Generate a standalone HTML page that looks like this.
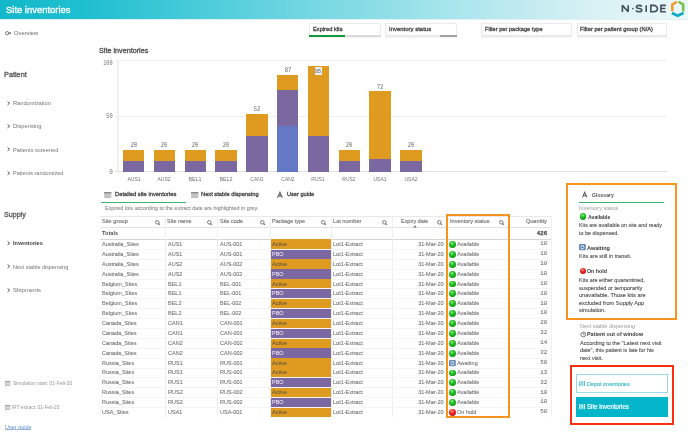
<!DOCTYPE html>
<html><head><meta charset="utf-8"><title>Site inventories</title>
<style>
html,body{margin:0;padding:0;background:#fff;}
body{width:688px;height:433px;position:relative;overflow:hidden;font-family:'Liberation Sans',sans-serif;}
#root{position:absolute;left:0;top:0;width:688px;height:433px;will-change:transform;background:#fff;overflow:hidden;}
.t{position:absolute;white-space:nowrap;}
.r{position:absolute;}
svg{position:absolute;overflow:visible;}
</style></head><body><div id="root">

<div class="r" style="left:0.00px;top:0.00px;width:688.00px;height:18.60px;background:linear-gradient(90deg,#12b8ca 0%,#1fbfd0 12.4%,#55cfdc 33.4%,#a8e5ec 65.4%,#d8f1f4 86%,#eaf8fa 100%);"></div>
<div class="r" style="left:0.00px;top:18.50px;width:688.00px;height:0.70px;background:rgba(200,225,230,0.5);"></div>
<div class="t" style="left:5.78px;top:5.22px;font-size:9.9px;line-height:9.9px;font-weight:400;color:#ffffff;font-family:'Liberation Sans', sans-serif;transform:scaleX(0.955);transform-origin:0 0;-webkit-text-stroke:0.35px #fff;">Site inventories</div>
<svg style="left:0;top:0" width="688" height="20" viewBox="0 0 688 20">
<g fill="none" stroke="#46505d" stroke-width="1.6" stroke-linejoin="miter">
<path d="M622.4 12.0 V5.35 L628.2 11.75 V5.2" stroke-linejoin="bevel"/>
<path d="M641.9 6.5 C641.2 5.7 640.2 5.35 639.1 5.35 C637.3 5.35 636.4 6.1 636.4 7.05 C636.4 8.1 637.5 8.35 639.1 8.55 C640.8 8.75 641.8 9.2 641.8 10.2 C641.8 11.2 640.8 11.75 639 11.75 C637.7 11.75 636.5 11.3 635.8 10.5"/>
<path d="M646.2 5.3 V11.9"/>
<path d="M650.8 5.35 V11.75 H653.4 C655.9 11.75 657.5 10.4 657.5 8.55 C657.5 6.7 655.9 5.35 653.4 5.35 Z"/>
<path d="M665.9 5.35 H660.9 V11.75 H665.9 M660.9 8.55 H665.4"/>
</g>
<rect x="632.1" y="7.9" width="1.5" height="1.4" fill="#46505d"/>
<g fill="none" stroke-linejoin="miter">
<path d="M677.0 1.7 L672.3 4.5 V11.2" stroke="#f59a2a" stroke-width="2.5"/>
<path d="M678.5 1.7 L683.2 4.5 V11.6" stroke="#7cc043" stroke-width="2.5"/>
<path d="M671.9 12.9 L677.7 15.7 L683.5 12.9" stroke="#12a9c4" stroke-width="2.8"/>
</g>
</svg>
<div class="r" style="left:309.30px;top:23.40px;width:71.70px;height:13.40px;background:#fff;border:1px solid #ebebeb;border-radius:1px;box-sizing:border-box;box-shadow:0 1px 1px rgba(0,0,0,0.05);"></div>
<div class="r" style="left:309.80px;top:35.00px;width:70.70px;height:0.90px;background:#e9e9e9;"></div>
<div class="r" style="left:309.30px;top:35.20px;width:35.70px;height:1.90px;background:#12993d;"></div>
<div class="r" style="left:345.00px;top:35.20px;width:36.00px;height:1.90px;background:#dcdcdc;"></div>
<div class="t" style="left:313.19px;top:27.11px;font-size:5.9px;line-height:5.9px;font-weight:400;color:#454545;font-family:'Liberation Sans', sans-serif;transform:scaleX(0.970);transform-origin:0 0;-webkit-text-stroke:0.3px #454545;">Expired kits</div>
<div class="r" style="left:385.40px;top:23.40px;width:71.60px;height:13.40px;background:#fff;border:1px solid #ebebeb;border-radius:1px;box-sizing:border-box;box-shadow:0 1px 1px rgba(0,0,0,0.05);"></div>
<div class="r" style="left:385.90px;top:35.00px;width:70.60px;height:0.90px;background:#e9e9e9;"></div>
<div class="r" style="left:439.80px;top:35.20px;width:17.20px;height:1.80px;background:#a3a3a3;"></div>
<div class="t" style="left:389.30px;top:27.11px;font-size:5.9px;line-height:5.9px;font-weight:400;color:#454545;font-family:'Liberation Sans', sans-serif;transform:scaleX(1.013);transform-origin:0 0;-webkit-text-stroke:0.3px #454545;">Inventory status</div>
<div class="r" style="left:481.00px;top:23.40px;width:90.50px;height:13.40px;background:#fff;border:1px solid #ebebeb;border-radius:1px;box-sizing:border-box;box-shadow:0 1px 1px rgba(0,0,0,0.05);"></div>
<div class="r" style="left:481.50px;top:35.00px;width:89.50px;height:0.90px;background:#e9e9e9;"></div>
<div class="t" style="left:484.89px;top:27.11px;font-size:5.9px;line-height:5.9px;font-weight:400;color:#454545;font-family:'Liberation Sans', sans-serif;transform:scaleX(0.960);transform-origin:0 0;-webkit-text-stroke:0.3px #454545;">Filter per package type</div>
<div class="r" style="left:576.60px;top:23.40px;width:90.90px;height:13.40px;background:#fff;border:1px solid #ebebeb;border-radius:1px;box-sizing:border-box;box-shadow:0 1px 1px rgba(0,0,0,0.05);"></div>
<div class="r" style="left:577.10px;top:35.00px;width:89.90px;height:0.90px;background:#e9e9e9;"></div>
<div class="t" style="left:580.49px;top:27.11px;font-size:5.9px;line-height:5.9px;font-weight:400;color:#454545;font-family:'Liberation Sans', sans-serif;transform:scaleX(0.978);transform-origin:0 0;-webkit-text-stroke:0.3px #454545;">Filter per patient group (N/A)</div>
<svg style="left:4.6px;top:30.6px" width="7" height="5" viewBox="0 0 7 5">
<circle cx="2.1" cy="2.2" r="1.65" fill="none" stroke="#777" stroke-width="0.95"/>
<rect x="3.7" y="1.4" width="2.4" height="1.6" fill="#777"/></svg>
<div class="t" style="left:13.89px;top:29.94px;font-size:6.1px;line-height:6.1px;font-weight:400;color:#6a6a6a;font-family:'Liberation Sans', sans-serif;transform:scaleX(0.951);transform-origin:0 0;">Overview</div>
<div class="t" style="left:3.80px;top:71.04px;font-size:7.4px;line-height:7.4px;font-weight:400;color:#666666;font-family:'Liberation Sans', sans-serif;transform:scaleX(0.989);transform-origin:0 0;-webkit-text-stroke:0.4px #666;">Patient</div>
<svg style="left:6.90px;top:100.90px" width="4" height="5" viewBox="0 0 4 5"><path d="M0.6 0.5 L2.6 2.2 L0.6 3.9" fill="none" stroke="#555" stroke-width="1.0"/></svg>
<div class="t" style="left:13.38px;top:100.30px;font-size:6.2px;line-height:6.2px;font-weight:400;color:#737373;font-family:'Liberation Sans', sans-serif;transform:scaleX(0.919);transform-origin:0 0;">Randomization</div>
<svg style="left:6.90px;top:123.80px" width="4" height="5" viewBox="0 0 4 5"><path d="M0.6 0.5 L2.6 2.2 L0.6 3.9" fill="none" stroke="#555" stroke-width="1.0"/></svg>
<div class="t" style="left:13.38px;top:123.15px;font-size:6.2px;line-height:6.2px;font-weight:400;color:#737373;font-family:'Liberation Sans', sans-serif;transform:scaleX(0.929);transform-origin:0 0;">Dispensing</div>
<svg style="left:6.90px;top:147.40px" width="4" height="5" viewBox="0 0 4 5"><path d="M0.6 0.5 L2.6 2.2 L0.6 3.9" fill="none" stroke="#555" stroke-width="1.0"/></svg>
<div class="t" style="left:13.38px;top:146.95px;font-size:6.2px;line-height:6.2px;font-weight:400;color:#737373;font-family:'Liberation Sans', sans-serif;transform:scaleX(0.916);transform-origin:0 0;">Patients screened</div>
<svg style="left:6.90px;top:170.70px" width="4" height="5" viewBox="0 0 4 5"><path d="M0.6 0.5 L2.6 2.2 L0.6 3.9" fill="none" stroke="#555" stroke-width="1.0"/></svg>
<div class="t" style="left:13.37px;top:170.15px;font-size:6.2px;line-height:6.2px;font-weight:400;color:#737373;font-family:'Liberation Sans', sans-serif;transform:scaleX(0.893);transform-origin:0 0;">Patients randomized</div>
<div class="t" style="left:3.69px;top:210.94px;font-size:7.4px;line-height:7.4px;font-weight:400;color:#666666;font-family:'Liberation Sans', sans-serif;transform:scaleX(0.963);transform-origin:0 0;-webkit-text-stroke:0.4px #666;">Supply</div>
<svg style="left:6.90px;top:240.60px" width="4" height="5" viewBox="0 0 4 5"><path d="M0.6 0.5 L2.6 2.2 L0.6 3.9" fill="none" stroke="#444" stroke-width="1.0"/></svg>
<div class="t" style="left:12.78px;top:239.84px;font-size:6.1px;line-height:6.1px;font-weight:700;color:#3d3d3d;font-family:'Liberation Sans', sans-serif;transform:scaleX(0.918);transform-origin:0 0;">Inventories</div>
<svg style="left:6.90px;top:264.30px" width="4" height="5" viewBox="0 0 4 5"><path d="M0.6 0.5 L2.6 2.2 L0.6 3.9" fill="none" stroke="#555" stroke-width="1.0"/></svg>
<div class="t" style="left:13.37px;top:263.85px;font-size:6.2px;line-height:6.2px;font-weight:400;color:#737373;font-family:'Liberation Sans', sans-serif;transform:scaleX(0.887);transform-origin:0 0;">Next stable dispensing</div>
<svg style="left:6.90px;top:287.50px" width="4" height="5" viewBox="0 0 4 5"><path d="M0.6 0.5 L2.6 2.2 L0.6 3.9" fill="none" stroke="#555" stroke-width="1.0"/></svg>
<div class="t" style="left:13.39px;top:286.65px;font-size:6.2px;line-height:6.2px;font-weight:400;color:#737373;font-family:'Liberation Sans', sans-serif;transform:scaleX(0.960);transform-origin:0 0;">Shipments</div>
<svg style="left:5.20px;top:381.20px" width="6" height="5" viewBox="0 0 6 5"><rect x="0.3" y="0.3" width="4.6" height="4.3" fill="#f4f4f4" stroke="#9a9a9a" stroke-width="0.6"/><rect x="0.3" y="0.3" width="4.6" height="1.0" fill="#9a9a9a"/><path d="M1.2 2.2h2.8M1.2 3.4h2.8M2.6 1.6v2.7" stroke="#b5b5b5" stroke-width="0.45"/></svg>
<div class="t" style="left:12.87px;top:380.86px;font-size:5.6px;line-height:5.6px;font-weight:400;color:#959595;font-family:'Liberation Sans', sans-serif;transform:scaleX(0.879);transform-origin:0 0;">Simulation start: 01-Feb-20</div>
<svg style="left:5.20px;top:404.60px" width="6" height="5" viewBox="0 0 6 5"><rect x="0.3" y="0.3" width="4.6" height="4.3" fill="#f4f4f4" stroke="#9a9a9a" stroke-width="0.6"/><rect x="0.3" y="0.3" width="4.6" height="1.0" fill="#9a9a9a"/><path d="M1.2 2.2h2.8M1.2 3.4h2.8M2.6 1.6v2.7" stroke="#b5b5b5" stroke-width="0.45"/></svg>
<div class="t" style="left:12.26px;top:404.86px;font-size:5.6px;line-height:5.6px;font-weight:400;color:#959595;font-family:'Liberation Sans', sans-serif;transform:scaleX(0.845);transform-origin:0 0;">IRT extract: 01-Feb-20</div>
<div class="t" style="left:4.89px;top:424.59px;font-size:5.8px;line-height:5.8px;font-weight:400;color:#6590c8;font-family:'Liberation Sans', sans-serif;transform:scaleX(0.949);transform-origin:0 0;">User guide</div>
<div class="r" style="left:4.90px;top:429.40px;width:26.20px;height:0.70px;background:#93b4dc;"></div>
<div class="t" style="left:99.13px;top:48.21px;font-size:6.6px;line-height:6.6px;font-weight:400;color:#5a5a5a;font-family:'Liberation Sans', sans-serif;transform:scaleX(1.093);transform-origin:0 0;-webkit-text-stroke:0.35px #5a5a5a;">Site inventories</div>
<div class="r" style="left:114.50px;top:59.60px;width:552.00px;height:1.00px;background:#efefef;"></div>
<div class="r" style="left:114.50px;top:115.50px;width:552.00px;height:1.00px;background:#efefef;"></div>
<div class="r" style="left:117.40px;top:60.10px;width:1.30px;height:111.80px;background:#f0f0f0;"></div>
<div class="r" style="left:114.50px;top:171.15px;width:552.00px;height:1.00px;background:#e0e0e0;"></div>
<div class="t" style="right:575.20px;text-align:right;top:60.58px;font-size:6.4px;line-height:6.4px;font-weight:400;color:#707070;font-family:'Liberation Mono', monospace;transform:scaleX(0.814);transform-origin:100% 0;">100</div>
<div class="t" style="right:575.20px;text-align:right;top:114.08px;font-size:6.4px;line-height:6.4px;font-weight:400;color:#707070;font-family:'Liberation Mono', monospace;transform:scaleX(0.844);transform-origin:100% 0;">50</div>
<div class="t" style="right:575.00px;text-align:right;top:169.98px;font-size:6.4px;line-height:6.4px;font-weight:400;color:#707070;font-family:'Liberation Mono', monospace;transform:scaleX(0.930);transform-origin:100% 0;">0</div>
<div class="r" style="left:122.90px;top:160.72px;width:21.50px;height:11.18px;background:#7b68a1;"></div>
<div class="r" style="left:122.90px;top:149.54px;width:21.50px;height:11.18px;background:#de9b20;"></div>
<div class="t" style="left:83.65px;width:100px;text-align:center;top:143.02px;font-size:6.4px;line-height:6.4px;font-weight:400;color:#6a6a6a;font-family:'Liberation Mono', monospace;transform:scaleX(0.857);transform-origin:50% 0;">20</div>
<div class="t" style="left:83.65px;width:100px;text-align:center;top:176.32px;font-size:6.0px;line-height:6.0px;font-weight:400;color:#737373;font-family:'Liberation Sans', sans-serif;transform:scaleX(0.844);transform-origin:50% 0;">AUS1</div>
<div class="r" style="left:153.70px;top:160.72px;width:21.50px;height:11.18px;background:#7b68a1;"></div>
<div class="r" style="left:153.70px;top:149.54px;width:21.50px;height:11.18px;background:#de9b20;"></div>
<div class="t" style="left:114.45px;width:100px;text-align:center;top:143.02px;font-size:6.4px;line-height:6.4px;font-weight:400;color:#6a6a6a;font-family:'Liberation Mono', monospace;transform:scaleX(0.857);transform-origin:50% 0;">20</div>
<div class="t" style="left:114.45px;width:100px;text-align:center;top:176.32px;font-size:6.0px;line-height:6.0px;font-weight:400;color:#737373;font-family:'Liberation Sans', sans-serif;transform:scaleX(0.844);transform-origin:50% 0;">AUS2</div>
<div class="r" style="left:184.50px;top:160.72px;width:21.50px;height:11.18px;background:#7b68a1;"></div>
<div class="r" style="left:184.50px;top:149.54px;width:21.50px;height:11.18px;background:#de9b20;"></div>
<div class="t" style="left:145.25px;width:100px;text-align:center;top:143.02px;font-size:6.4px;line-height:6.4px;font-weight:400;color:#6a6a6a;font-family:'Liberation Mono', monospace;transform:scaleX(0.857);transform-origin:50% 0;">20</div>
<div class="t" style="left:145.25px;width:100px;text-align:center;top:176.32px;font-size:6.0px;line-height:6.0px;font-weight:400;color:#737373;font-family:'Liberation Sans', sans-serif;transform:scaleX(0.901);transform-origin:50% 0;">BEL1</div>
<div class="r" style="left:215.30px;top:160.72px;width:21.50px;height:11.18px;background:#7b68a1;"></div>
<div class="r" style="left:215.30px;top:149.54px;width:21.50px;height:11.18px;background:#de9b20;"></div>
<div class="t" style="left:176.05px;width:100px;text-align:center;top:143.02px;font-size:6.4px;line-height:6.4px;font-weight:400;color:#6a6a6a;font-family:'Liberation Mono', monospace;transform:scaleX(0.857);transform-origin:50% 0;">20</div>
<div class="t" style="left:176.05px;width:100px;text-align:center;top:176.32px;font-size:6.0px;line-height:6.0px;font-weight:400;color:#737373;font-family:'Liberation Sans', sans-serif;transform:scaleX(0.901);transform-origin:50% 0;">BEL2</div>
<div class="r" style="left:246.10px;top:136.12px;width:21.50px;height:35.78px;background:#7b68a1;"></div>
<div class="r" style="left:246.10px;top:113.76px;width:21.50px;height:22.36px;background:#de9b20;"></div>
<div class="t" style="left:206.85px;width:100px;text-align:center;top:107.25px;font-size:6.4px;line-height:6.4px;font-weight:400;color:#6a6a6a;font-family:'Liberation Mono', monospace;transform:scaleX(0.857);transform-origin:50% 0;">52</div>
<div class="t" style="left:206.85px;width:100px;text-align:center;top:176.32px;font-size:6.0px;line-height:6.0px;font-weight:400;color:#737373;font-family:'Liberation Sans', sans-serif;transform:scaleX(0.827);transform-origin:50% 0;">CAN1</div>
<div class="r" style="left:276.90px;top:126.06px;width:21.50px;height:45.84px;background:#6479c6;"></div>
<div class="r" style="left:276.90px;top:90.29px;width:21.50px;height:35.78px;background:#7b68a1;"></div>
<div class="r" style="left:276.90px;top:74.63px;width:21.50px;height:15.65px;background:#de9b20;"></div>
<div class="t" style="left:237.65px;width:100px;text-align:center;top:68.12px;font-size:6.4px;line-height:6.4px;font-weight:400;color:#6a6a6a;font-family:'Liberation Mono', monospace;transform:scaleX(0.857);transform-origin:50% 0;">87</div>
<div class="t" style="left:237.65px;width:100px;text-align:center;top:176.32px;font-size:6.0px;line-height:6.0px;font-weight:400;color:#737373;font-family:'Liberation Sans', sans-serif;transform:scaleX(0.827);transform-origin:50% 0;">CAN2</div>
<div class="r" style="left:307.70px;top:136.12px;width:21.50px;height:35.78px;background:#7b68a1;"></div>
<div class="r" style="left:307.70px;top:65.69px;width:21.50px;height:70.43px;background:#de9b20;"></div>
<div class="r" style="left:314.95px;top:66.99px;width:7.10px;height:7.60px;background:#eaeef0;"></div>
<div class="t" style="left:268.45px;width:100px;text-align:center;top:68.94px;font-size:6.2px;line-height:6.2px;font-weight:400;color:#5a5a5a;font-family:'Liberation Mono', monospace;transform:scaleX(0.828);transform-origin:50% 0;">95</div>
<div class="t" style="left:268.45px;width:100px;text-align:center;top:176.32px;font-size:6.0px;line-height:6.0px;font-weight:400;color:#737373;font-family:'Liberation Sans', sans-serif;transform:scaleX(0.827);transform-origin:50% 0;">RUS1</div>
<div class="r" style="left:338.50px;top:160.72px;width:21.50px;height:11.18px;background:#7b68a1;"></div>
<div class="r" style="left:338.50px;top:149.54px;width:21.50px;height:11.18px;background:#de9b20;"></div>
<div class="t" style="left:299.25px;width:100px;text-align:center;top:143.02px;font-size:6.4px;line-height:6.4px;font-weight:400;color:#6a6a6a;font-family:'Liberation Mono', monospace;transform:scaleX(0.857);transform-origin:50% 0;">20</div>
<div class="t" style="left:299.25px;width:100px;text-align:center;top:176.32px;font-size:6.0px;line-height:6.0px;font-weight:400;color:#737373;font-family:'Liberation Sans', sans-serif;transform:scaleX(0.827);transform-origin:50% 0;">RUS2</div>
<div class="r" style="left:369.30px;top:159.04px;width:21.50px;height:12.86px;background:#7b68a1;"></div>
<div class="r" style="left:369.30px;top:91.40px;width:21.50px;height:67.64px;background:#de9b20;"></div>
<div class="t" style="left:330.05px;width:100px;text-align:center;top:84.89px;font-size:6.4px;line-height:6.4px;font-weight:400;color:#6a6a6a;font-family:'Liberation Mono', monospace;transform:scaleX(0.857);transform-origin:50% 0;">72</div>
<div class="t" style="left:330.05px;width:100px;text-align:center;top:176.32px;font-size:6.0px;line-height:6.0px;font-weight:400;color:#737373;font-family:'Liberation Sans', sans-serif;transform:scaleX(0.844);transform-origin:50% 0;">USA1</div>
<div class="r" style="left:400.10px;top:160.72px;width:21.50px;height:11.18px;background:#7b68a1;"></div>
<div class="r" style="left:400.10px;top:149.54px;width:21.50px;height:11.18px;background:#de9b20;"></div>
<div class="t" style="left:360.85px;width:100px;text-align:center;top:143.02px;font-size:6.4px;line-height:6.4px;font-weight:400;color:#6a6a6a;font-family:'Liberation Mono', monospace;transform:scaleX(0.857);transform-origin:50% 0;">20</div>
<div class="t" style="left:360.85px;width:100px;text-align:center;top:176.32px;font-size:6.0px;line-height:6.0px;font-weight:400;color:#737373;font-family:'Liberation Sans', sans-serif;transform:scaleX(0.844);transform-origin:50% 0;">USA2</div>
<svg style="left:104.20px;top:191.70px" width="8" height="7" viewBox="0 0 8 7"><rect x="0" y="0" width="7.4" height="6" fill="#c9c9c9"/><rect x="0" y="0" width="7.4" height="1.3" fill="#8a8a8a"/><path d="M2.45 1.3v4.7M4.95 1.3v4.7" stroke="#9a9a9a" stroke-width="0.6"/><path d="M0 3.5h7.4" stroke="#dadada" stroke-width="0.4"/></svg>
<div class="t" style="left:114.89px;top:192.31px;font-size:5.9px;line-height:5.9px;font-weight:400;color:#454545;font-family:'Liberation Sans', sans-serif;transform:scaleX(0.981);transform-origin:0 0;-webkit-text-stroke:0.3px #454545;">Detailed site inventories</div>
<div class="r" style="left:100.80px;top:201.80px;width:85.30px;height:1.20px;background:#3cb56f;"></div>
<svg style="left:190.50px;top:191.70px" width="8" height="7" viewBox="0 0 8 7"><rect x="0" y="0" width="7.4" height="6" fill="#c9c9c9"/><rect x="0" y="0" width="7.4" height="1.3" fill="#8a8a8a"/><path d="M2.45 1.3v4.7M4.95 1.3v4.7" stroke="#9a9a9a" stroke-width="0.6"/><path d="M0 3.5h7.4" stroke="#dadada" stroke-width="0.4"/></svg>
<div class="t" style="left:200.69px;top:192.31px;font-size:5.9px;line-height:5.9px;font-weight:400;color:#454545;font-family:'Liberation Sans', sans-serif;transform:scaleX(0.972);transform-origin:0 0;-webkit-text-stroke:0.3px #454545;">Next stable dispensing</div>
<svg style="left:276.5px;top:191.8px" width="7" height="7" viewBox="0 0 7 7"><path d="M0.5 5.8 L2.95 0.4 L5.4 5.8 M1.4 3.9 H4.5" fill="none" stroke="#5f5f5f" stroke-width="1.1"/></svg>
<div class="t" style="left:286.79px;top:192.31px;font-size:5.9px;line-height:5.9px;font-weight:400;color:#454545;font-family:'Liberation Sans', sans-serif;transform:scaleX(0.952);transform-origin:0 0;-webkit-text-stroke:0.3px #454545;">User guide</div>
<div class="t" style="left:104.89px;top:205.57px;font-size:5.7px;line-height:5.7px;font-weight:400;color:#8e8e8e;font-family:'Liberation Sans', sans-serif;transform:scaleX(0.948);transform-origin:0 0;-webkit-text-stroke:0.1px #8e8e8e;">Expired lots according to the extract date are highlighted in grey.</div>
<div class="r" style="left:100.00px;top:215.90px;width:451.50px;height:0.80px;background:#e8e8e8;"></div>
<div class="r" style="left:100.00px;top:227.00px;width:451.50px;height:0.90px;background:#e2e2e2;"></div>
<div class="r" style="left:100.00px;top:238.80px;width:451.50px;height:1.30px;background:#d6d6d6;"></div>
<div class="r" style="left:165.20px;top:216.30px;width:0.80px;height:201.18px;background:#efefef;"></div>
<div class="r" style="left:217.20px;top:216.30px;width:0.80px;height:201.18px;background:#efefef;"></div>
<div class="r" style="left:270.20px;top:216.30px;width:0.80px;height:201.18px;background:#efefef;"></div>
<div class="r" style="left:330.80px;top:216.30px;width:0.80px;height:201.18px;background:#efefef;"></div>
<div class="r" style="left:391.50px;top:216.30px;width:0.80px;height:201.18px;background:#efefef;"></div>
<div class="r" style="left:446.50px;top:216.30px;width:0.80px;height:201.18px;background:#efefef;"></div>
<div class="r" style="left:551.10px;top:216.30px;width:0.80px;height:201.18px;background:#f0f0f0;"></div>
<div class="t" style="left:102.19px;top:219.01px;font-size:5.9px;line-height:5.9px;font-weight:400;color:#6e6e6e;font-family:'Liberation Sans', sans-serif;transform:scaleX(0.962);transform-origin:0 0;-webkit-text-stroke:0.12px #6e6e6e;">Site group</div>
<svg style="left:155.00px;top:219.60px" width="6" height="6" viewBox="0 0 6 6"><circle cx="2.3" cy="2.3" r="1.75" fill="none" stroke="#6a6a6a" stroke-width="0.9"/><path d="M3.5 3.5 L4.9 4.9" stroke="#6a6a6a" stroke-width="1.1"/></svg>
<div class="t" style="left:167.28px;top:219.01px;font-size:5.9px;line-height:5.9px;font-weight:400;color:#6e6e6e;font-family:'Liberation Sans', sans-serif;transform:scaleX(0.928);transform-origin:0 0;-webkit-text-stroke:0.12px #6e6e6e;">Site name</div>
<svg style="left:207.30px;top:219.60px" width="6" height="6" viewBox="0 0 6 6"><circle cx="2.3" cy="2.3" r="1.75" fill="none" stroke="#6a6a6a" stroke-width="0.9"/><path d="M3.5 3.5 L4.9 4.9" stroke="#6a6a6a" stroke-width="1.1"/></svg>
<div class="t" style="left:219.78px;top:219.01px;font-size:5.9px;line-height:5.9px;font-weight:400;color:#6e6e6e;font-family:'Liberation Sans', sans-serif;transform:scaleX(0.938);transform-origin:0 0;-webkit-text-stroke:0.12px #6e6e6e;">Site code</div>
<svg style="left:260.20px;top:219.60px" width="6" height="6" viewBox="0 0 6 6"><circle cx="2.3" cy="2.3" r="1.75" fill="none" stroke="#6a6a6a" stroke-width="0.9"/><path d="M3.5 3.5 L4.9 4.9" stroke="#6a6a6a" stroke-width="1.1"/></svg>
<div class="t" style="left:272.28px;top:219.01px;font-size:5.9px;line-height:5.9px;font-weight:400;color:#6e6e6e;font-family:'Liberation Sans', sans-serif;transform:scaleX(0.925);transform-origin:0 0;-webkit-text-stroke:0.12px #6e6e6e;">Package type</div>
<svg style="left:321.10px;top:219.60px" width="6" height="6" viewBox="0 0 6 6"><circle cx="2.3" cy="2.3" r="1.75" fill="none" stroke="#6a6a6a" stroke-width="0.9"/><path d="M3.5 3.5 L4.9 4.9" stroke="#6a6a6a" stroke-width="1.1"/></svg>
<div class="t" style="left:333.39px;top:219.01px;font-size:5.9px;line-height:5.9px;font-weight:400;color:#6e6e6e;font-family:'Liberation Sans', sans-serif;transform:scaleX(0.954);transform-origin:0 0;-webkit-text-stroke:0.12px #6e6e6e;">Lot number</div>
<svg style="left:381.90px;top:219.60px" width="6" height="6" viewBox="0 0 6 6"><circle cx="2.3" cy="2.3" r="1.75" fill="none" stroke="#6a6a6a" stroke-width="0.9"/><path d="M3.5 3.5 L4.9 4.9" stroke="#6a6a6a" stroke-width="1.1"/></svg>
<div class="t" style="left:401.48px;top:219.01px;font-size:5.9px;line-height:5.9px;font-weight:400;color:#6e6e6e;font-family:'Liberation Sans', sans-serif;transform:scaleX(0.924);transform-origin:0 0;-webkit-text-stroke:0.12px #6e6e6e;">Expiry date</div>
<svg style="left:436.80px;top:219.60px" width="6" height="6" viewBox="0 0 6 6"><circle cx="2.3" cy="2.3" r="1.75" fill="none" stroke="#6a6a6a" stroke-width="0.9"/><path d="M3.5 3.5 L4.9 4.9" stroke="#6a6a6a" stroke-width="1.1"/></svg>
<div class="t" style="left:449.69px;top:219.01px;font-size:5.9px;line-height:5.9px;font-weight:400;color:#6e6e6e;font-family:'Liberation Sans', sans-serif;transform:scaleX(0.950);transform-origin:0 0;-webkit-text-stroke:0.12px #6e6e6e;">Inventory status</div>
<svg style="left:498.90px;top:219.60px" width="6" height="6" viewBox="0 0 6 6"><circle cx="2.3" cy="2.3" r="1.75" fill="none" stroke="#6a6a6a" stroke-width="0.9"/><path d="M3.5 3.5 L4.9 4.9" stroke="#6a6a6a" stroke-width="1.1"/></svg>
<svg style="left:412.8px;top:225.4px" width="4" height="3" viewBox="0 0 4 3"><path d="M0.2 2.5 L2 0.2 L3.8 2.5 Z" fill="#707070"/></svg>
<div class="t" style="right:141.20px;text-align:right;top:219.01px;font-size:5.9px;line-height:5.9px;font-weight:400;color:#6e6e6e;font-family:'Liberation Sans', sans-serif;transform:scaleX(0.968);transform-origin:100% 0;-webkit-text-stroke:0.12px #6e6e6e;">Quantity</div>
<div class="t" style="left:102.27px;top:230.15px;font-size:6.2px;line-height:6.2px;font-weight:700;color:#505050;font-family:'Liberation Sans', sans-serif;transform:scaleX(0.910);transform-origin:0 0;">Totals</div>
<div class="t" style="right:141.00px;text-align:right;top:231.25px;font-size:6.2px;line-height:6.2px;font-weight:700;color:#505050;font-family:'Liberation Mono', monospace;transform:scaleX(0.930);transform-origin:100% 0;-webkit-text-stroke:0.3px #505050;">426</div>
<div class="r" style="left:270.50px;top:239.40px;width:60.70px;height:9.44px;background:#de9b20;"></div>
<div class="t" style="left:102.47px;top:240.95px;font-size:6.2px;line-height:6.2px;font-weight:400;color:#6e6e6e;font-family:'Liberation Sans', sans-serif;transform:scaleX(0.890);transform-origin:0 0;-webkit-text-stroke:0.08px #6e6e6e;">Australia_Sites</div>
<div class="t" style="left:167.57px;top:240.95px;font-size:6.2px;line-height:6.2px;font-weight:400;color:#6e6e6e;font-family:'Liberation Sans', sans-serif;transform:scaleX(0.890);transform-origin:0 0;-webkit-text-stroke:0.08px #6e6e6e;">AUS1</div>
<div class="t" style="left:219.87px;top:240.95px;font-size:6.2px;line-height:6.2px;font-weight:400;color:#6e6e6e;font-family:'Liberation Sans', sans-serif;transform:scaleX(0.890);transform-origin:0 0;-webkit-text-stroke:0.08px #6e6e6e;">AUS-001</div>
<div class="t" style="left:272.17px;top:240.95px;font-size:6.2px;line-height:6.2px;font-weight:400;color:#4a4a4a;font-family:'Liberation Sans', sans-serif;transform:scaleX(0.890);transform-origin:0 0;">Active</div>
<div class="t" style="left:333.37px;top:240.95px;font-size:6.2px;line-height:6.2px;font-weight:400;color:#6e6e6e;font-family:'Liberation Sans', sans-serif;transform:scaleX(0.890);transform-origin:0 0;-webkit-text-stroke:0.08px #6e6e6e;">Lot1-Extract</div>
<div class="t" style="right:244.00px;text-align:right;top:240.95px;font-size:6.2px;line-height:6.2px;font-weight:400;color:#6e6e6e;font-family:'Liberation Sans', sans-serif;transform:scaleX(0.890);transform-origin:100% 0;-webkit-text-stroke:0.08px #6e6e6e;">31-Mar-20</div>
<div class="r" style="left:449.40px;top:241.04px;width:6.8px;height:6.8px;border-radius:50%;background:radial-gradient(circle at 42% 32%,#8af58a 0%,#2cc42c 30%,#0c9f0c 70%,#077d07 100%);"></div>
<div class="t" style="left:457.47px;top:240.95px;font-size:6.2px;line-height:6.2px;font-weight:400;color:#6e6e6e;font-family:'Liberation Sans', sans-serif;transform:scaleX(0.890);transform-origin:0 0;-webkit-text-stroke:0.08px #6e6e6e;">Available</div>
<div class="t" style="right:141.00px;text-align:right;top:241.22px;font-size:6.0px;line-height:6.0px;font-weight:400;color:#6e6e6e;font-family:'Liberation Mono', monospace;transform:scaleX(0.963);transform-origin:100% 0;-webkit-text-stroke:0.08px #6e6e6e;">10</div>
<div class="r" style="left:100.00px;top:248.94px;width:451.50px;height:0.90px;background:#f5f5f5;"></div>
<div class="r" style="left:270.50px;top:249.54px;width:60.70px;height:9.29px;background:#7b68a1;"></div>
<div class="t" style="left:102.47px;top:250.84px;font-size:6.2px;line-height:6.2px;font-weight:400;color:#6e6e6e;font-family:'Liberation Sans', sans-serif;transform:scaleX(0.890);transform-origin:0 0;-webkit-text-stroke:0.08px #6e6e6e;">Australia_Sites</div>
<div class="t" style="left:167.57px;top:250.84px;font-size:6.2px;line-height:6.2px;font-weight:400;color:#6e6e6e;font-family:'Liberation Sans', sans-serif;transform:scaleX(0.890);transform-origin:0 0;-webkit-text-stroke:0.08px #6e6e6e;">AUS1</div>
<div class="t" style="left:219.87px;top:250.84px;font-size:6.2px;line-height:6.2px;font-weight:400;color:#6e6e6e;font-family:'Liberation Sans', sans-serif;transform:scaleX(0.890);transform-origin:0 0;-webkit-text-stroke:0.08px #6e6e6e;">AUS-001</div>
<div class="t" style="left:272.17px;top:250.84px;font-size:6.2px;line-height:6.2px;font-weight:400;color:#f6f3fa;font-family:'Liberation Sans', sans-serif;transform:scaleX(0.890);transform-origin:0 0;">PBO</div>
<div class="t" style="left:333.37px;top:250.84px;font-size:6.2px;line-height:6.2px;font-weight:400;color:#6e6e6e;font-family:'Liberation Sans', sans-serif;transform:scaleX(0.890);transform-origin:0 0;-webkit-text-stroke:0.08px #6e6e6e;">Lot1-Extract</div>
<div class="t" style="right:244.00px;text-align:right;top:250.84px;font-size:6.2px;line-height:6.2px;font-weight:400;color:#6e6e6e;font-family:'Liberation Sans', sans-serif;transform:scaleX(0.890);transform-origin:100% 0;-webkit-text-stroke:0.08px #6e6e6e;">31-Mar-20</div>
<div class="r" style="left:449.40px;top:250.93px;width:6.8px;height:6.8px;border-radius:50%;background:radial-gradient(circle at 42% 32%,#8af58a 0%,#2cc42c 30%,#0c9f0c 70%,#077d07 100%);"></div>
<div class="t" style="left:457.47px;top:250.84px;font-size:6.2px;line-height:6.2px;font-weight:400;color:#6e6e6e;font-family:'Liberation Sans', sans-serif;transform:scaleX(0.890);transform-origin:0 0;-webkit-text-stroke:0.08px #6e6e6e;">Available</div>
<div class="t" style="right:141.00px;text-align:right;top:251.11px;font-size:6.0px;line-height:6.0px;font-weight:400;color:#6e6e6e;font-family:'Liberation Mono', monospace;transform:scaleX(0.963);transform-origin:100% 0;-webkit-text-stroke:0.08px #6e6e6e;">10</div>
<div class="r" style="left:100.00px;top:258.82px;width:451.50px;height:0.90px;background:#f5f5f5;"></div>
<div class="r" style="left:270.50px;top:259.42px;width:60.70px;height:9.29px;background:#de9b20;"></div>
<div class="t" style="left:102.47px;top:260.73px;font-size:6.2px;line-height:6.2px;font-weight:400;color:#6e6e6e;font-family:'Liberation Sans', sans-serif;transform:scaleX(0.890);transform-origin:0 0;-webkit-text-stroke:0.08px #6e6e6e;">Australia_Sites</div>
<div class="t" style="left:167.57px;top:260.73px;font-size:6.2px;line-height:6.2px;font-weight:400;color:#6e6e6e;font-family:'Liberation Sans', sans-serif;transform:scaleX(0.890);transform-origin:0 0;-webkit-text-stroke:0.08px #6e6e6e;">AUS2</div>
<div class="t" style="left:219.87px;top:260.73px;font-size:6.2px;line-height:6.2px;font-weight:400;color:#6e6e6e;font-family:'Liberation Sans', sans-serif;transform:scaleX(0.890);transform-origin:0 0;-webkit-text-stroke:0.08px #6e6e6e;">AUS-002</div>
<div class="t" style="left:272.17px;top:260.73px;font-size:6.2px;line-height:6.2px;font-weight:400;color:#4a4a4a;font-family:'Liberation Sans', sans-serif;transform:scaleX(0.890);transform-origin:0 0;">Active</div>
<div class="t" style="left:333.37px;top:260.73px;font-size:6.2px;line-height:6.2px;font-weight:400;color:#6e6e6e;font-family:'Liberation Sans', sans-serif;transform:scaleX(0.890);transform-origin:0 0;-webkit-text-stroke:0.08px #6e6e6e;">Lot1-Extract</div>
<div class="t" style="right:244.00px;text-align:right;top:260.73px;font-size:6.2px;line-height:6.2px;font-weight:400;color:#6e6e6e;font-family:'Liberation Sans', sans-serif;transform:scaleX(0.890);transform-origin:100% 0;-webkit-text-stroke:0.08px #6e6e6e;">31-Mar-20</div>
<div class="r" style="left:449.40px;top:260.82px;width:6.8px;height:6.8px;border-radius:50%;background:radial-gradient(circle at 42% 32%,#8af58a 0%,#2cc42c 30%,#0c9f0c 70%,#077d07 100%);"></div>
<div class="t" style="left:457.47px;top:260.73px;font-size:6.2px;line-height:6.2px;font-weight:400;color:#6e6e6e;font-family:'Liberation Sans', sans-serif;transform:scaleX(0.890);transform-origin:0 0;-webkit-text-stroke:0.08px #6e6e6e;">Available</div>
<div class="t" style="right:141.00px;text-align:right;top:261.00px;font-size:6.0px;line-height:6.0px;font-weight:400;color:#6e6e6e;font-family:'Liberation Mono', monospace;transform:scaleX(0.963);transform-origin:100% 0;-webkit-text-stroke:0.08px #6e6e6e;">10</div>
<div class="r" style="left:100.00px;top:268.71px;width:451.50px;height:0.90px;background:#f5f5f5;"></div>
<div class="r" style="left:270.50px;top:269.31px;width:60.70px;height:9.29px;background:#7b68a1;"></div>
<div class="t" style="left:102.47px;top:270.61px;font-size:6.2px;line-height:6.2px;font-weight:400;color:#6e6e6e;font-family:'Liberation Sans', sans-serif;transform:scaleX(0.890);transform-origin:0 0;-webkit-text-stroke:0.08px #6e6e6e;">Australia_Sites</div>
<div class="t" style="left:167.57px;top:270.61px;font-size:6.2px;line-height:6.2px;font-weight:400;color:#6e6e6e;font-family:'Liberation Sans', sans-serif;transform:scaleX(0.890);transform-origin:0 0;-webkit-text-stroke:0.08px #6e6e6e;">AUS2</div>
<div class="t" style="left:219.87px;top:270.61px;font-size:6.2px;line-height:6.2px;font-weight:400;color:#6e6e6e;font-family:'Liberation Sans', sans-serif;transform:scaleX(0.890);transform-origin:0 0;-webkit-text-stroke:0.08px #6e6e6e;">AUS-002</div>
<div class="t" style="left:272.17px;top:270.61px;font-size:6.2px;line-height:6.2px;font-weight:400;color:#f6f3fa;font-family:'Liberation Sans', sans-serif;transform:scaleX(0.890);transform-origin:0 0;">PBO</div>
<div class="t" style="left:333.37px;top:270.61px;font-size:6.2px;line-height:6.2px;font-weight:400;color:#6e6e6e;font-family:'Liberation Sans', sans-serif;transform:scaleX(0.890);transform-origin:0 0;-webkit-text-stroke:0.08px #6e6e6e;">Lot1-Extract</div>
<div class="t" style="right:244.00px;text-align:right;top:270.61px;font-size:6.2px;line-height:6.2px;font-weight:400;color:#6e6e6e;font-family:'Liberation Sans', sans-serif;transform:scaleX(0.890);transform-origin:100% 0;-webkit-text-stroke:0.08px #6e6e6e;">31-Mar-20</div>
<div class="r" style="left:449.40px;top:270.71px;width:6.8px;height:6.8px;border-radius:50%;background:radial-gradient(circle at 42% 32%,#8af58a 0%,#2cc42c 30%,#0c9f0c 70%,#077d07 100%);"></div>
<div class="t" style="left:457.47px;top:270.61px;font-size:6.2px;line-height:6.2px;font-weight:400;color:#6e6e6e;font-family:'Liberation Sans', sans-serif;transform:scaleX(0.890);transform-origin:0 0;-webkit-text-stroke:0.08px #6e6e6e;">Available</div>
<div class="t" style="right:141.00px;text-align:right;top:270.88px;font-size:6.0px;line-height:6.0px;font-weight:400;color:#6e6e6e;font-family:'Liberation Mono', monospace;transform:scaleX(0.963);transform-origin:100% 0;-webkit-text-stroke:0.08px #6e6e6e;">10</div>
<div class="r" style="left:100.00px;top:278.60px;width:451.50px;height:0.90px;background:#f5f5f5;"></div>
<div class="r" style="left:270.50px;top:279.20px;width:60.70px;height:9.29px;background:#de9b20;"></div>
<div class="t" style="left:102.47px;top:280.50px;font-size:6.2px;line-height:6.2px;font-weight:400;color:#6e6e6e;font-family:'Liberation Sans', sans-serif;transform:scaleX(0.890);transform-origin:0 0;-webkit-text-stroke:0.08px #6e6e6e;">Belgium_Sites</div>
<div class="t" style="left:167.57px;top:280.50px;font-size:6.2px;line-height:6.2px;font-weight:400;color:#6e6e6e;font-family:'Liberation Sans', sans-serif;transform:scaleX(0.890);transform-origin:0 0;-webkit-text-stroke:0.08px #6e6e6e;">BEL1</div>
<div class="t" style="left:219.87px;top:280.50px;font-size:6.2px;line-height:6.2px;font-weight:400;color:#6e6e6e;font-family:'Liberation Sans', sans-serif;transform:scaleX(0.890);transform-origin:0 0;-webkit-text-stroke:0.08px #6e6e6e;">BEL-001</div>
<div class="t" style="left:272.17px;top:280.50px;font-size:6.2px;line-height:6.2px;font-weight:400;color:#4a4a4a;font-family:'Liberation Sans', sans-serif;transform:scaleX(0.890);transform-origin:0 0;">Active</div>
<div class="t" style="left:333.37px;top:280.50px;font-size:6.2px;line-height:6.2px;font-weight:400;color:#6e6e6e;font-family:'Liberation Sans', sans-serif;transform:scaleX(0.890);transform-origin:0 0;-webkit-text-stroke:0.08px #6e6e6e;">Lot1-Extract</div>
<div class="t" style="right:244.00px;text-align:right;top:280.50px;font-size:6.2px;line-height:6.2px;font-weight:400;color:#6e6e6e;font-family:'Liberation Sans', sans-serif;transform:scaleX(0.890);transform-origin:100% 0;-webkit-text-stroke:0.08px #6e6e6e;">31-Mar-20</div>
<div class="r" style="left:449.40px;top:280.59px;width:6.8px;height:6.8px;border-radius:50%;background:radial-gradient(circle at 42% 32%,#8af58a 0%,#2cc42c 30%,#0c9f0c 70%,#077d07 100%);"></div>
<div class="t" style="left:457.47px;top:280.50px;font-size:6.2px;line-height:6.2px;font-weight:400;color:#6e6e6e;font-family:'Liberation Sans', sans-serif;transform:scaleX(0.890);transform-origin:0 0;-webkit-text-stroke:0.08px #6e6e6e;">Available</div>
<div class="t" style="right:141.00px;text-align:right;top:280.77px;font-size:6.0px;line-height:6.0px;font-weight:400;color:#6e6e6e;font-family:'Liberation Mono', monospace;transform:scaleX(0.963);transform-origin:100% 0;-webkit-text-stroke:0.08px #6e6e6e;">10</div>
<div class="r" style="left:100.00px;top:288.49px;width:451.50px;height:0.90px;background:#f5f5f5;"></div>
<div class="r" style="left:270.50px;top:289.09px;width:60.70px;height:9.29px;background:#7b68a1;"></div>
<div class="t" style="left:102.47px;top:290.39px;font-size:6.2px;line-height:6.2px;font-weight:400;color:#6e6e6e;font-family:'Liberation Sans', sans-serif;transform:scaleX(0.890);transform-origin:0 0;-webkit-text-stroke:0.08px #6e6e6e;">Belgium_Sites</div>
<div class="t" style="left:167.57px;top:290.39px;font-size:6.2px;line-height:6.2px;font-weight:400;color:#6e6e6e;font-family:'Liberation Sans', sans-serif;transform:scaleX(0.890);transform-origin:0 0;-webkit-text-stroke:0.08px #6e6e6e;">BEL1</div>
<div class="t" style="left:219.87px;top:290.39px;font-size:6.2px;line-height:6.2px;font-weight:400;color:#6e6e6e;font-family:'Liberation Sans', sans-serif;transform:scaleX(0.890);transform-origin:0 0;-webkit-text-stroke:0.08px #6e6e6e;">BEL-001</div>
<div class="t" style="left:272.17px;top:290.39px;font-size:6.2px;line-height:6.2px;font-weight:400;color:#f6f3fa;font-family:'Liberation Sans', sans-serif;transform:scaleX(0.890);transform-origin:0 0;">PBO</div>
<div class="t" style="left:333.37px;top:290.39px;font-size:6.2px;line-height:6.2px;font-weight:400;color:#6e6e6e;font-family:'Liberation Sans', sans-serif;transform:scaleX(0.890);transform-origin:0 0;-webkit-text-stroke:0.08px #6e6e6e;">Lot1-Extract</div>
<div class="t" style="right:244.00px;text-align:right;top:290.39px;font-size:6.2px;line-height:6.2px;font-weight:400;color:#6e6e6e;font-family:'Liberation Sans', sans-serif;transform:scaleX(0.890);transform-origin:100% 0;-webkit-text-stroke:0.08px #6e6e6e;">31-Mar-20</div>
<div class="r" style="left:449.40px;top:290.48px;width:6.8px;height:6.8px;border-radius:50%;background:radial-gradient(circle at 42% 32%,#8af58a 0%,#2cc42c 30%,#0c9f0c 70%,#077d07 100%);"></div>
<div class="t" style="left:457.47px;top:290.39px;font-size:6.2px;line-height:6.2px;font-weight:400;color:#6e6e6e;font-family:'Liberation Sans', sans-serif;transform:scaleX(0.890);transform-origin:0 0;-webkit-text-stroke:0.08px #6e6e6e;">Available</div>
<div class="t" style="right:141.00px;text-align:right;top:290.66px;font-size:6.0px;line-height:6.0px;font-weight:400;color:#6e6e6e;font-family:'Liberation Mono', monospace;transform:scaleX(0.963);transform-origin:100% 0;-webkit-text-stroke:0.08px #6e6e6e;">10</div>
<div class="r" style="left:100.00px;top:298.38px;width:451.50px;height:0.90px;background:#f5f5f5;"></div>
<div class="r" style="left:270.50px;top:298.97px;width:60.70px;height:9.29px;background:#de9b20;"></div>
<div class="t" style="left:102.47px;top:300.28px;font-size:6.2px;line-height:6.2px;font-weight:400;color:#6e6e6e;font-family:'Liberation Sans', sans-serif;transform:scaleX(0.890);transform-origin:0 0;-webkit-text-stroke:0.08px #6e6e6e;">Belgium_Sites</div>
<div class="t" style="left:167.57px;top:300.28px;font-size:6.2px;line-height:6.2px;font-weight:400;color:#6e6e6e;font-family:'Liberation Sans', sans-serif;transform:scaleX(0.890);transform-origin:0 0;-webkit-text-stroke:0.08px #6e6e6e;">BEL2</div>
<div class="t" style="left:219.87px;top:300.28px;font-size:6.2px;line-height:6.2px;font-weight:400;color:#6e6e6e;font-family:'Liberation Sans', sans-serif;transform:scaleX(0.890);transform-origin:0 0;-webkit-text-stroke:0.08px #6e6e6e;">BEL-002</div>
<div class="t" style="left:272.17px;top:300.28px;font-size:6.2px;line-height:6.2px;font-weight:400;color:#4a4a4a;font-family:'Liberation Sans', sans-serif;transform:scaleX(0.890);transform-origin:0 0;">Active</div>
<div class="t" style="left:333.37px;top:300.28px;font-size:6.2px;line-height:6.2px;font-weight:400;color:#6e6e6e;font-family:'Liberation Sans', sans-serif;transform:scaleX(0.890);transform-origin:0 0;-webkit-text-stroke:0.08px #6e6e6e;">Lot1-Extract</div>
<div class="t" style="right:244.00px;text-align:right;top:300.28px;font-size:6.2px;line-height:6.2px;font-weight:400;color:#6e6e6e;font-family:'Liberation Sans', sans-serif;transform:scaleX(0.890);transform-origin:100% 0;-webkit-text-stroke:0.08px #6e6e6e;">31-Mar-20</div>
<div class="r" style="left:449.40px;top:300.37px;width:6.8px;height:6.8px;border-radius:50%;background:radial-gradient(circle at 42% 32%,#8af58a 0%,#2cc42c 30%,#0c9f0c 70%,#077d07 100%);"></div>
<div class="t" style="left:457.47px;top:300.28px;font-size:6.2px;line-height:6.2px;font-weight:400;color:#6e6e6e;font-family:'Liberation Sans', sans-serif;transform:scaleX(0.890);transform-origin:0 0;-webkit-text-stroke:0.08px #6e6e6e;">Available</div>
<div class="t" style="right:141.00px;text-align:right;top:300.55px;font-size:6.0px;line-height:6.0px;font-weight:400;color:#6e6e6e;font-family:'Liberation Mono', monospace;transform:scaleX(0.963);transform-origin:100% 0;-webkit-text-stroke:0.08px #6e6e6e;">10</div>
<div class="r" style="left:100.00px;top:308.26px;width:451.50px;height:0.90px;background:#f5f5f5;"></div>
<div class="r" style="left:270.50px;top:308.86px;width:60.70px;height:9.29px;background:#7b68a1;"></div>
<div class="t" style="left:102.47px;top:310.16px;font-size:6.2px;line-height:6.2px;font-weight:400;color:#6e6e6e;font-family:'Liberation Sans', sans-serif;transform:scaleX(0.890);transform-origin:0 0;-webkit-text-stroke:0.08px #6e6e6e;">Belgium_Sites</div>
<div class="t" style="left:167.57px;top:310.16px;font-size:6.2px;line-height:6.2px;font-weight:400;color:#6e6e6e;font-family:'Liberation Sans', sans-serif;transform:scaleX(0.890);transform-origin:0 0;-webkit-text-stroke:0.08px #6e6e6e;">BEL2</div>
<div class="t" style="left:219.87px;top:310.16px;font-size:6.2px;line-height:6.2px;font-weight:400;color:#6e6e6e;font-family:'Liberation Sans', sans-serif;transform:scaleX(0.890);transform-origin:0 0;-webkit-text-stroke:0.08px #6e6e6e;">BEL-002</div>
<div class="t" style="left:272.17px;top:310.16px;font-size:6.2px;line-height:6.2px;font-weight:400;color:#f6f3fa;font-family:'Liberation Sans', sans-serif;transform:scaleX(0.890);transform-origin:0 0;">PBO</div>
<div class="t" style="left:333.37px;top:310.16px;font-size:6.2px;line-height:6.2px;font-weight:400;color:#6e6e6e;font-family:'Liberation Sans', sans-serif;transform:scaleX(0.890);transform-origin:0 0;-webkit-text-stroke:0.08px #6e6e6e;">Lot1-Extract</div>
<div class="t" style="right:244.00px;text-align:right;top:310.16px;font-size:6.2px;line-height:6.2px;font-weight:400;color:#6e6e6e;font-family:'Liberation Sans', sans-serif;transform:scaleX(0.890);transform-origin:100% 0;-webkit-text-stroke:0.08px #6e6e6e;">31-Mar-20</div>
<div class="r" style="left:449.40px;top:310.26px;width:6.8px;height:6.8px;border-radius:50%;background:radial-gradient(circle at 42% 32%,#8af58a 0%,#2cc42c 30%,#0c9f0c 70%,#077d07 100%);"></div>
<div class="t" style="left:457.47px;top:310.16px;font-size:6.2px;line-height:6.2px;font-weight:400;color:#6e6e6e;font-family:'Liberation Sans', sans-serif;transform:scaleX(0.890);transform-origin:0 0;-webkit-text-stroke:0.08px #6e6e6e;">Available</div>
<div class="t" style="right:141.00px;text-align:right;top:310.43px;font-size:6.0px;line-height:6.0px;font-weight:400;color:#6e6e6e;font-family:'Liberation Mono', monospace;transform:scaleX(0.963);transform-origin:100% 0;-webkit-text-stroke:0.08px #6e6e6e;">10</div>
<div class="r" style="left:100.00px;top:318.15px;width:451.50px;height:0.90px;background:#f5f5f5;"></div>
<div class="r" style="left:270.50px;top:318.75px;width:60.70px;height:9.29px;background:#de9b20;"></div>
<div class="t" style="left:102.47px;top:320.05px;font-size:6.2px;line-height:6.2px;font-weight:400;color:#6e6e6e;font-family:'Liberation Sans', sans-serif;transform:scaleX(0.890);transform-origin:0 0;-webkit-text-stroke:0.08px #6e6e6e;">Canada_Sites</div>
<div class="t" style="left:167.57px;top:320.05px;font-size:6.2px;line-height:6.2px;font-weight:400;color:#6e6e6e;font-family:'Liberation Sans', sans-serif;transform:scaleX(0.890);transform-origin:0 0;-webkit-text-stroke:0.08px #6e6e6e;">CAN1</div>
<div class="t" style="left:219.87px;top:320.05px;font-size:6.2px;line-height:6.2px;font-weight:400;color:#6e6e6e;font-family:'Liberation Sans', sans-serif;transform:scaleX(0.890);transform-origin:0 0;-webkit-text-stroke:0.08px #6e6e6e;">CAN-001</div>
<div class="t" style="left:272.17px;top:320.05px;font-size:6.2px;line-height:6.2px;font-weight:400;color:#4a4a4a;font-family:'Liberation Sans', sans-serif;transform:scaleX(0.890);transform-origin:0 0;">Active</div>
<div class="t" style="left:333.37px;top:320.05px;font-size:6.2px;line-height:6.2px;font-weight:400;color:#6e6e6e;font-family:'Liberation Sans', sans-serif;transform:scaleX(0.890);transform-origin:0 0;-webkit-text-stroke:0.08px #6e6e6e;">Lot1-Extract</div>
<div class="t" style="right:244.00px;text-align:right;top:320.05px;font-size:6.2px;line-height:6.2px;font-weight:400;color:#6e6e6e;font-family:'Liberation Sans', sans-serif;transform:scaleX(0.890);transform-origin:100% 0;-webkit-text-stroke:0.08px #6e6e6e;">31-Mar-20</div>
<div class="r" style="left:449.40px;top:320.14px;width:6.8px;height:6.8px;border-radius:50%;background:radial-gradient(circle at 42% 32%,#8af58a 0%,#2cc42c 30%,#0c9f0c 70%,#077d07 100%);"></div>
<div class="t" style="left:457.47px;top:320.05px;font-size:6.2px;line-height:6.2px;font-weight:400;color:#6e6e6e;font-family:'Liberation Sans', sans-serif;transform:scaleX(0.890);transform-origin:0 0;-webkit-text-stroke:0.08px #6e6e6e;">Available</div>
<div class="t" style="right:141.00px;text-align:right;top:320.32px;font-size:6.0px;line-height:6.0px;font-weight:400;color:#6e6e6e;font-family:'Liberation Mono', monospace;transform:scaleX(0.963);transform-origin:100% 0;-webkit-text-stroke:0.08px #6e6e6e;">20</div>
<div class="r" style="left:100.00px;top:328.04px;width:451.50px;height:0.90px;background:#f5f5f5;"></div>
<div class="r" style="left:270.50px;top:328.64px;width:60.70px;height:9.29px;background:#7b68a1;"></div>
<div class="t" style="left:102.47px;top:329.94px;font-size:6.2px;line-height:6.2px;font-weight:400;color:#6e6e6e;font-family:'Liberation Sans', sans-serif;transform:scaleX(0.890);transform-origin:0 0;-webkit-text-stroke:0.08px #6e6e6e;">Canada_Sites</div>
<div class="t" style="left:167.57px;top:329.94px;font-size:6.2px;line-height:6.2px;font-weight:400;color:#6e6e6e;font-family:'Liberation Sans', sans-serif;transform:scaleX(0.890);transform-origin:0 0;-webkit-text-stroke:0.08px #6e6e6e;">CAN1</div>
<div class="t" style="left:219.87px;top:329.94px;font-size:6.2px;line-height:6.2px;font-weight:400;color:#6e6e6e;font-family:'Liberation Sans', sans-serif;transform:scaleX(0.890);transform-origin:0 0;-webkit-text-stroke:0.08px #6e6e6e;">CAN-001</div>
<div class="t" style="left:272.17px;top:329.94px;font-size:6.2px;line-height:6.2px;font-weight:400;color:#f6f3fa;font-family:'Liberation Sans', sans-serif;transform:scaleX(0.890);transform-origin:0 0;">PBO</div>
<div class="t" style="left:333.37px;top:329.94px;font-size:6.2px;line-height:6.2px;font-weight:400;color:#6e6e6e;font-family:'Liberation Sans', sans-serif;transform:scaleX(0.890);transform-origin:0 0;-webkit-text-stroke:0.08px #6e6e6e;">Lot1-Extract</div>
<div class="t" style="right:244.00px;text-align:right;top:329.94px;font-size:6.2px;line-height:6.2px;font-weight:400;color:#6e6e6e;font-family:'Liberation Sans', sans-serif;transform:scaleX(0.890);transform-origin:100% 0;-webkit-text-stroke:0.08px #6e6e6e;">31-Mar-20</div>
<div class="r" style="left:449.40px;top:330.03px;width:6.8px;height:6.8px;border-radius:50%;background:radial-gradient(circle at 42% 32%,#8af58a 0%,#2cc42c 30%,#0c9f0c 70%,#077d07 100%);"></div>
<div class="t" style="left:457.47px;top:329.94px;font-size:6.2px;line-height:6.2px;font-weight:400;color:#6e6e6e;font-family:'Liberation Sans', sans-serif;transform:scaleX(0.890);transform-origin:0 0;-webkit-text-stroke:0.08px #6e6e6e;">Available</div>
<div class="t" style="right:141.00px;text-align:right;top:330.21px;font-size:6.0px;line-height:6.0px;font-weight:400;color:#6e6e6e;font-family:'Liberation Mono', monospace;transform:scaleX(0.963);transform-origin:100% 0;-webkit-text-stroke:0.08px #6e6e6e;">32</div>
<div class="r" style="left:100.00px;top:337.93px;width:451.50px;height:0.90px;background:#f5f5f5;"></div>
<div class="r" style="left:270.50px;top:338.52px;width:60.70px;height:9.29px;background:#de9b20;"></div>
<div class="t" style="left:102.47px;top:339.83px;font-size:6.2px;line-height:6.2px;font-weight:400;color:#6e6e6e;font-family:'Liberation Sans', sans-serif;transform:scaleX(0.890);transform-origin:0 0;-webkit-text-stroke:0.08px #6e6e6e;">Canada_Sites</div>
<div class="t" style="left:167.57px;top:339.83px;font-size:6.2px;line-height:6.2px;font-weight:400;color:#6e6e6e;font-family:'Liberation Sans', sans-serif;transform:scaleX(0.890);transform-origin:0 0;-webkit-text-stroke:0.08px #6e6e6e;">CAN2</div>
<div class="t" style="left:219.87px;top:339.83px;font-size:6.2px;line-height:6.2px;font-weight:400;color:#6e6e6e;font-family:'Liberation Sans', sans-serif;transform:scaleX(0.890);transform-origin:0 0;-webkit-text-stroke:0.08px #6e6e6e;">CAN-002</div>
<div class="t" style="left:272.17px;top:339.83px;font-size:6.2px;line-height:6.2px;font-weight:400;color:#4a4a4a;font-family:'Liberation Sans', sans-serif;transform:scaleX(0.890);transform-origin:0 0;">Active</div>
<div class="t" style="left:333.37px;top:339.83px;font-size:6.2px;line-height:6.2px;font-weight:400;color:#6e6e6e;font-family:'Liberation Sans', sans-serif;transform:scaleX(0.890);transform-origin:0 0;-webkit-text-stroke:0.08px #6e6e6e;">Lot1-Extract</div>
<div class="t" style="right:244.00px;text-align:right;top:339.83px;font-size:6.2px;line-height:6.2px;font-weight:400;color:#6e6e6e;font-family:'Liberation Sans', sans-serif;transform:scaleX(0.890);transform-origin:100% 0;-webkit-text-stroke:0.08px #6e6e6e;">31-Mar-20</div>
<div class="r" style="left:449.40px;top:339.92px;width:6.8px;height:6.8px;border-radius:50%;background:radial-gradient(circle at 42% 32%,#8af58a 0%,#2cc42c 30%,#0c9f0c 70%,#077d07 100%);"></div>
<div class="t" style="left:457.47px;top:339.83px;font-size:6.2px;line-height:6.2px;font-weight:400;color:#6e6e6e;font-family:'Liberation Sans', sans-serif;transform:scaleX(0.890);transform-origin:0 0;-webkit-text-stroke:0.08px #6e6e6e;">Available</div>
<div class="t" style="right:141.00px;text-align:right;top:340.10px;font-size:6.0px;line-height:6.0px;font-weight:400;color:#6e6e6e;font-family:'Liberation Mono', monospace;transform:scaleX(0.963);transform-origin:100% 0;-webkit-text-stroke:0.08px #6e6e6e;">14</div>
<div class="r" style="left:100.00px;top:347.81px;width:451.50px;height:0.90px;background:#f5f5f5;"></div>
<div class="r" style="left:270.50px;top:348.41px;width:60.70px;height:9.29px;background:#7b68a1;"></div>
<div class="t" style="left:102.47px;top:349.71px;font-size:6.2px;line-height:6.2px;font-weight:400;color:#6e6e6e;font-family:'Liberation Sans', sans-serif;transform:scaleX(0.890);transform-origin:0 0;-webkit-text-stroke:0.08px #6e6e6e;">Canada_Sites</div>
<div class="t" style="left:167.57px;top:349.71px;font-size:6.2px;line-height:6.2px;font-weight:400;color:#6e6e6e;font-family:'Liberation Sans', sans-serif;transform:scaleX(0.890);transform-origin:0 0;-webkit-text-stroke:0.08px #6e6e6e;">CAN2</div>
<div class="t" style="left:219.87px;top:349.71px;font-size:6.2px;line-height:6.2px;font-weight:400;color:#6e6e6e;font-family:'Liberation Sans', sans-serif;transform:scaleX(0.890);transform-origin:0 0;-webkit-text-stroke:0.08px #6e6e6e;">CAN-002</div>
<div class="t" style="left:272.17px;top:349.71px;font-size:6.2px;line-height:6.2px;font-weight:400;color:#f6f3fa;font-family:'Liberation Sans', sans-serif;transform:scaleX(0.890);transform-origin:0 0;">PBO</div>
<div class="t" style="left:333.37px;top:349.71px;font-size:6.2px;line-height:6.2px;font-weight:400;color:#6e6e6e;font-family:'Liberation Sans', sans-serif;transform:scaleX(0.890);transform-origin:0 0;-webkit-text-stroke:0.08px #6e6e6e;">Lot1-Extract</div>
<div class="t" style="right:244.00px;text-align:right;top:349.71px;font-size:6.2px;line-height:6.2px;font-weight:400;color:#6e6e6e;font-family:'Liberation Sans', sans-serif;transform:scaleX(0.890);transform-origin:100% 0;-webkit-text-stroke:0.08px #6e6e6e;">31-Mar-20</div>
<div class="r" style="left:449.40px;top:349.81px;width:6.8px;height:6.8px;border-radius:50%;background:radial-gradient(circle at 42% 32%,#8af58a 0%,#2cc42c 30%,#0c9f0c 70%,#077d07 100%);"></div>
<div class="t" style="left:457.47px;top:349.71px;font-size:6.2px;line-height:6.2px;font-weight:400;color:#6e6e6e;font-family:'Liberation Sans', sans-serif;transform:scaleX(0.890);transform-origin:0 0;-webkit-text-stroke:0.08px #6e6e6e;">Available</div>
<div class="t" style="right:141.00px;text-align:right;top:349.98px;font-size:6.0px;line-height:6.0px;font-weight:400;color:#6e6e6e;font-family:'Liberation Mono', monospace;transform:scaleX(0.963);transform-origin:100% 0;-webkit-text-stroke:0.08px #6e6e6e;">32</div>
<div class="r" style="left:100.00px;top:357.70px;width:451.50px;height:0.90px;background:#f5f5f5;"></div>
<div class="r" style="left:270.50px;top:358.30px;width:60.70px;height:9.29px;background:#de9b20;"></div>
<div class="t" style="left:102.47px;top:359.60px;font-size:6.2px;line-height:6.2px;font-weight:400;color:#6e6e6e;font-family:'Liberation Sans', sans-serif;transform:scaleX(0.890);transform-origin:0 0;-webkit-text-stroke:0.08px #6e6e6e;">Russia_Sites</div>
<div class="t" style="left:167.57px;top:359.60px;font-size:6.2px;line-height:6.2px;font-weight:400;color:#6e6e6e;font-family:'Liberation Sans', sans-serif;transform:scaleX(0.890);transform-origin:0 0;-webkit-text-stroke:0.08px #6e6e6e;">RUS1</div>
<div class="t" style="left:219.87px;top:359.60px;font-size:6.2px;line-height:6.2px;font-weight:400;color:#6e6e6e;font-family:'Liberation Sans', sans-serif;transform:scaleX(0.890);transform-origin:0 0;-webkit-text-stroke:0.08px #6e6e6e;">RUS-001</div>
<div class="t" style="left:272.17px;top:359.60px;font-size:6.2px;line-height:6.2px;font-weight:400;color:#4a4a4a;font-family:'Liberation Sans', sans-serif;transform:scaleX(0.890);transform-origin:0 0;">Active</div>
<div class="t" style="left:333.37px;top:359.60px;font-size:6.2px;line-height:6.2px;font-weight:400;color:#6e6e6e;font-family:'Liberation Sans', sans-serif;transform:scaleX(0.890);transform-origin:0 0;-webkit-text-stroke:0.08px #6e6e6e;">Lot1-Extract</div>
<div class="t" style="right:244.00px;text-align:right;top:359.60px;font-size:6.2px;line-height:6.2px;font-weight:400;color:#6e6e6e;font-family:'Liberation Sans', sans-serif;transform:scaleX(0.890);transform-origin:100% 0;-webkit-text-stroke:0.08px #6e6e6e;">31-Mar-20</div>
<svg style="left:449.20px;top:360.15px" width="7" height="7" viewBox="0 0 7 7"><rect x="0" y="0" width="6.8" height="6.3" rx="1.2" fill="#6289b5"/><path d="M1.7 3.0 A1.75 1.75 0 0 1 4.9 2.3 M5.1 3.4 A1.75 1.75 0 0 1 1.9 4.1" fill="none" stroke="#f2f6fb" stroke-width="0.85"/><path d="M4.2 1.5 L5.5 2.5 L4.1 3.0 Z" fill="#f2f6fb"/><path d="M2.6 4.9 L1.3 3.9 L2.7 3.4 Z" fill="#f2f6fb"/></svg>
<div class="t" style="left:457.47px;top:359.60px;font-size:6.2px;line-height:6.2px;font-weight:400;color:#6e6e6e;font-family:'Liberation Sans', sans-serif;transform:scaleX(0.890);transform-origin:0 0;-webkit-text-stroke:0.08px #6e6e6e;">Awaiting</div>
<div class="t" style="right:141.00px;text-align:right;top:359.87px;font-size:6.0px;line-height:6.0px;font-weight:400;color:#6e6e6e;font-family:'Liberation Mono', monospace;transform:scaleX(0.963);transform-origin:100% 0;-webkit-text-stroke:0.08px #6e6e6e;">50</div>
<div class="r" style="left:100.00px;top:367.59px;width:451.50px;height:0.90px;background:#f5f5f5;"></div>
<div class="r" style="left:270.50px;top:368.19px;width:60.70px;height:9.29px;background:#de9b20;"></div>
<div class="t" style="left:102.47px;top:369.49px;font-size:6.2px;line-height:6.2px;font-weight:400;color:#6e6e6e;font-family:'Liberation Sans', sans-serif;transform:scaleX(0.890);transform-origin:0 0;-webkit-text-stroke:0.08px #6e6e6e;">Russia_Sites</div>
<div class="t" style="left:167.57px;top:369.49px;font-size:6.2px;line-height:6.2px;font-weight:400;color:#6e6e6e;font-family:'Liberation Sans', sans-serif;transform:scaleX(0.890);transform-origin:0 0;-webkit-text-stroke:0.08px #6e6e6e;">RUS1</div>
<div class="t" style="left:219.87px;top:369.49px;font-size:6.2px;line-height:6.2px;font-weight:400;color:#6e6e6e;font-family:'Liberation Sans', sans-serif;transform:scaleX(0.890);transform-origin:0 0;-webkit-text-stroke:0.08px #6e6e6e;">RUS-001</div>
<div class="t" style="left:272.17px;top:369.49px;font-size:6.2px;line-height:6.2px;font-weight:400;color:#4a4a4a;font-family:'Liberation Sans', sans-serif;transform:scaleX(0.890);transform-origin:0 0;">Active</div>
<div class="t" style="left:333.37px;top:369.49px;font-size:6.2px;line-height:6.2px;font-weight:400;color:#6e6e6e;font-family:'Liberation Sans', sans-serif;transform:scaleX(0.890);transform-origin:0 0;-webkit-text-stroke:0.08px #6e6e6e;">Lot1-Extract</div>
<div class="t" style="right:244.00px;text-align:right;top:369.49px;font-size:6.2px;line-height:6.2px;font-weight:400;color:#6e6e6e;font-family:'Liberation Sans', sans-serif;transform:scaleX(0.890);transform-origin:100% 0;-webkit-text-stroke:0.08px #6e6e6e;">31-Mar-20</div>
<div class="r" style="left:449.40px;top:369.58px;width:6.8px;height:6.8px;border-radius:50%;background:radial-gradient(circle at 42% 32%,#8af58a 0%,#2cc42c 30%,#0c9f0c 70%,#077d07 100%);"></div>
<div class="t" style="left:457.47px;top:369.49px;font-size:6.2px;line-height:6.2px;font-weight:400;color:#6e6e6e;font-family:'Liberation Sans', sans-serif;transform:scaleX(0.890);transform-origin:0 0;-webkit-text-stroke:0.08px #6e6e6e;">Available</div>
<div class="t" style="right:141.00px;text-align:right;top:369.76px;font-size:6.0px;line-height:6.0px;font-weight:400;color:#6e6e6e;font-family:'Liberation Mono', monospace;transform:scaleX(0.963);transform-origin:100% 0;-webkit-text-stroke:0.08px #6e6e6e;">13</div>
<div class="r" style="left:100.00px;top:377.47px;width:451.50px;height:0.90px;background:#f5f5f5;"></div>
<div class="r" style="left:270.50px;top:378.07px;width:60.70px;height:9.29px;background:#7b68a1;"></div>
<div class="t" style="left:102.47px;top:379.38px;font-size:6.2px;line-height:6.2px;font-weight:400;color:#6e6e6e;font-family:'Liberation Sans', sans-serif;transform:scaleX(0.890);transform-origin:0 0;-webkit-text-stroke:0.08px #6e6e6e;">Russia_Sites</div>
<div class="t" style="left:167.57px;top:379.38px;font-size:6.2px;line-height:6.2px;font-weight:400;color:#6e6e6e;font-family:'Liberation Sans', sans-serif;transform:scaleX(0.890);transform-origin:0 0;-webkit-text-stroke:0.08px #6e6e6e;">RUS1</div>
<div class="t" style="left:219.87px;top:379.38px;font-size:6.2px;line-height:6.2px;font-weight:400;color:#6e6e6e;font-family:'Liberation Sans', sans-serif;transform:scaleX(0.890);transform-origin:0 0;-webkit-text-stroke:0.08px #6e6e6e;">RUS-001</div>
<div class="t" style="left:272.17px;top:379.38px;font-size:6.2px;line-height:6.2px;font-weight:400;color:#f6f3fa;font-family:'Liberation Sans', sans-serif;transform:scaleX(0.890);transform-origin:0 0;">PBO</div>
<div class="t" style="left:333.37px;top:379.38px;font-size:6.2px;line-height:6.2px;font-weight:400;color:#6e6e6e;font-family:'Liberation Sans', sans-serif;transform:scaleX(0.890);transform-origin:0 0;-webkit-text-stroke:0.08px #6e6e6e;">Lot1-Extract</div>
<div class="t" style="right:244.00px;text-align:right;top:379.38px;font-size:6.2px;line-height:6.2px;font-weight:400;color:#6e6e6e;font-family:'Liberation Sans', sans-serif;transform:scaleX(0.890);transform-origin:100% 0;-webkit-text-stroke:0.08px #6e6e6e;">31-Mar-20</div>
<div class="r" style="left:449.40px;top:379.47px;width:6.8px;height:6.8px;border-radius:50%;background:radial-gradient(circle at 42% 32%,#8af58a 0%,#2cc42c 30%,#0c9f0c 70%,#077d07 100%);"></div>
<div class="t" style="left:457.47px;top:379.38px;font-size:6.2px;line-height:6.2px;font-weight:400;color:#6e6e6e;font-family:'Liberation Sans', sans-serif;transform:scaleX(0.890);transform-origin:0 0;-webkit-text-stroke:0.08px #6e6e6e;">Available</div>
<div class="t" style="right:141.00px;text-align:right;top:379.65px;font-size:6.0px;line-height:6.0px;font-weight:400;color:#6e6e6e;font-family:'Liberation Mono', monospace;transform:scaleX(0.963);transform-origin:100% 0;-webkit-text-stroke:0.08px #6e6e6e;">32</div>
<div class="r" style="left:100.00px;top:387.36px;width:451.50px;height:0.90px;background:#f5f5f5;"></div>
<div class="r" style="left:270.50px;top:387.96px;width:60.70px;height:9.29px;background:#de9b20;"></div>
<div class="t" style="left:102.47px;top:389.26px;font-size:6.2px;line-height:6.2px;font-weight:400;color:#6e6e6e;font-family:'Liberation Sans', sans-serif;transform:scaleX(0.890);transform-origin:0 0;-webkit-text-stroke:0.08px #6e6e6e;">Russia_Sites</div>
<div class="t" style="left:167.57px;top:389.26px;font-size:6.2px;line-height:6.2px;font-weight:400;color:#6e6e6e;font-family:'Liberation Sans', sans-serif;transform:scaleX(0.890);transform-origin:0 0;-webkit-text-stroke:0.08px #6e6e6e;">RUS2</div>
<div class="t" style="left:219.87px;top:389.26px;font-size:6.2px;line-height:6.2px;font-weight:400;color:#6e6e6e;font-family:'Liberation Sans', sans-serif;transform:scaleX(0.890);transform-origin:0 0;-webkit-text-stroke:0.08px #6e6e6e;">RUS-002</div>
<div class="t" style="left:272.17px;top:389.26px;font-size:6.2px;line-height:6.2px;font-weight:400;color:#4a4a4a;font-family:'Liberation Sans', sans-serif;transform:scaleX(0.890);transform-origin:0 0;">Active</div>
<div class="t" style="left:333.37px;top:389.26px;font-size:6.2px;line-height:6.2px;font-weight:400;color:#6e6e6e;font-family:'Liberation Sans', sans-serif;transform:scaleX(0.890);transform-origin:0 0;-webkit-text-stroke:0.08px #6e6e6e;">Lot1-Extract</div>
<div class="t" style="right:244.00px;text-align:right;top:389.26px;font-size:6.2px;line-height:6.2px;font-weight:400;color:#6e6e6e;font-family:'Liberation Sans', sans-serif;transform:scaleX(0.890);transform-origin:100% 0;-webkit-text-stroke:0.08px #6e6e6e;">31-Mar-20</div>
<div class="r" style="left:449.40px;top:389.36px;width:6.8px;height:6.8px;border-radius:50%;background:radial-gradient(circle at 42% 32%,#8af58a 0%,#2cc42c 30%,#0c9f0c 70%,#077d07 100%);"></div>
<div class="t" style="left:457.47px;top:389.26px;font-size:6.2px;line-height:6.2px;font-weight:400;color:#6e6e6e;font-family:'Liberation Sans', sans-serif;transform:scaleX(0.890);transform-origin:0 0;-webkit-text-stroke:0.08px #6e6e6e;">Available</div>
<div class="t" style="right:141.00px;text-align:right;top:389.53px;font-size:6.0px;line-height:6.0px;font-weight:400;color:#6e6e6e;font-family:'Liberation Mono', monospace;transform:scaleX(0.963);transform-origin:100% 0;-webkit-text-stroke:0.08px #6e6e6e;">10</div>
<div class="r" style="left:100.00px;top:397.25px;width:451.50px;height:0.90px;background:#f5f5f5;"></div>
<div class="r" style="left:270.50px;top:397.85px;width:60.70px;height:9.29px;background:#7b68a1;"></div>
<div class="t" style="left:102.47px;top:399.15px;font-size:6.2px;line-height:6.2px;font-weight:400;color:#6e6e6e;font-family:'Liberation Sans', sans-serif;transform:scaleX(0.890);transform-origin:0 0;-webkit-text-stroke:0.08px #6e6e6e;">Russia_Sites</div>
<div class="t" style="left:167.57px;top:399.15px;font-size:6.2px;line-height:6.2px;font-weight:400;color:#6e6e6e;font-family:'Liberation Sans', sans-serif;transform:scaleX(0.890);transform-origin:0 0;-webkit-text-stroke:0.08px #6e6e6e;">RUS2</div>
<div class="t" style="left:219.87px;top:399.15px;font-size:6.2px;line-height:6.2px;font-weight:400;color:#6e6e6e;font-family:'Liberation Sans', sans-serif;transform:scaleX(0.890);transform-origin:0 0;-webkit-text-stroke:0.08px #6e6e6e;">RUS-002</div>
<div class="t" style="left:272.17px;top:399.15px;font-size:6.2px;line-height:6.2px;font-weight:400;color:#f6f3fa;font-family:'Liberation Sans', sans-serif;transform:scaleX(0.890);transform-origin:0 0;">PBO</div>
<div class="t" style="left:333.37px;top:399.15px;font-size:6.2px;line-height:6.2px;font-weight:400;color:#6e6e6e;font-family:'Liberation Sans', sans-serif;transform:scaleX(0.890);transform-origin:0 0;-webkit-text-stroke:0.08px #6e6e6e;">Lot1-Extract</div>
<div class="t" style="right:244.00px;text-align:right;top:399.15px;font-size:6.2px;line-height:6.2px;font-weight:400;color:#6e6e6e;font-family:'Liberation Sans', sans-serif;transform:scaleX(0.890);transform-origin:100% 0;-webkit-text-stroke:0.08px #6e6e6e;">31-Mar-20</div>
<div class="r" style="left:449.40px;top:399.24px;width:6.8px;height:6.8px;border-radius:50%;background:radial-gradient(circle at 42% 32%,#8af58a 0%,#2cc42c 30%,#0c9f0c 70%,#077d07 100%);"></div>
<div class="t" style="left:457.47px;top:399.15px;font-size:6.2px;line-height:6.2px;font-weight:400;color:#6e6e6e;font-family:'Liberation Sans', sans-serif;transform:scaleX(0.890);transform-origin:0 0;-webkit-text-stroke:0.08px #6e6e6e;">Available</div>
<div class="t" style="right:141.00px;text-align:right;top:399.42px;font-size:6.0px;line-height:6.0px;font-weight:400;color:#6e6e6e;font-family:'Liberation Mono', monospace;transform:scaleX(0.963);transform-origin:100% 0;-webkit-text-stroke:0.08px #6e6e6e;">10</div>
<div class="r" style="left:100.00px;top:407.14px;width:451.50px;height:0.90px;background:#f5f5f5;"></div>
<div class="r" style="left:270.50px;top:407.74px;width:60.70px;height:9.29px;background:#de9b20;"></div>
<div class="t" style="left:102.47px;top:409.04px;font-size:6.2px;line-height:6.2px;font-weight:400;color:#6e6e6e;font-family:'Liberation Sans', sans-serif;transform:scaleX(0.890);transform-origin:0 0;-webkit-text-stroke:0.08px #6e6e6e;">USA_Sites</div>
<div class="t" style="left:167.57px;top:409.04px;font-size:6.2px;line-height:6.2px;font-weight:400;color:#6e6e6e;font-family:'Liberation Sans', sans-serif;transform:scaleX(0.890);transform-origin:0 0;-webkit-text-stroke:0.08px #6e6e6e;">USA1</div>
<div class="t" style="left:219.87px;top:409.04px;font-size:6.2px;line-height:6.2px;font-weight:400;color:#6e6e6e;font-family:'Liberation Sans', sans-serif;transform:scaleX(0.890);transform-origin:0 0;-webkit-text-stroke:0.08px #6e6e6e;">USA-001</div>
<div class="t" style="left:272.17px;top:409.04px;font-size:6.2px;line-height:6.2px;font-weight:400;color:#4a4a4a;font-family:'Liberation Sans', sans-serif;transform:scaleX(0.890);transform-origin:0 0;">Active</div>
<div class="t" style="left:333.37px;top:409.04px;font-size:6.2px;line-height:6.2px;font-weight:400;color:#6e6e6e;font-family:'Liberation Sans', sans-serif;transform:scaleX(0.890);transform-origin:0 0;-webkit-text-stroke:0.08px #6e6e6e;">Lot1-Extract</div>
<div class="t" style="right:244.00px;text-align:right;top:409.04px;font-size:6.2px;line-height:6.2px;font-weight:400;color:#6e6e6e;font-family:'Liberation Sans', sans-serif;transform:scaleX(0.890);transform-origin:100% 0;-webkit-text-stroke:0.08px #6e6e6e;">31-Mar-20</div>
<div class="r" style="left:449.40px;top:409.13px;width:6.8px;height:6.8px;border-radius:50%;background:radial-gradient(circle at 42% 32%,#ff9a90 0%,#ea2a2a 35%,#c51212 75%,#9c0b0b 100%);"></div>
<div class="t" style="left:457.47px;top:409.04px;font-size:6.2px;line-height:6.2px;font-weight:400;color:#6e6e6e;font-family:'Liberation Sans', sans-serif;transform:scaleX(0.890);transform-origin:0 0;-webkit-text-stroke:0.08px #6e6e6e;">On hold</div>
<div class="t" style="right:141.00px;text-align:right;top:409.31px;font-size:6.0px;line-height:6.0px;font-weight:400;color:#6e6e6e;font-family:'Liberation Mono', monospace;transform:scaleX(0.963);transform-origin:100% 0;-webkit-text-stroke:0.08px #6e6e6e;">50</div>
<div class="r" style="left:446.00px;top:214.00px;width:63.50px;height:203.50px;background:transparent;border:2px solid #f7941d;box-sizing:border-box;"></div>
<div class="r" style="left:566.00px;top:182.50px;width:111.00px;height:137.00px;background:transparent;border:2px solid #f7941d;box-sizing:border-box;"></div>
<svg style="left:582.4px;top:192.2px" width="7" height="7" viewBox="0 0 7 7"><path d="M0.45 5.4 L2.7 0.25 L4.95 5.4 M1.3 3.7 H4.1" fill="none" stroke="#5a5a5a" stroke-width="1.1"/></svg>
<div class="t" style="left:592.38px;top:192.76px;font-size:5.6px;line-height:5.6px;font-weight:700;color:#505050;font-family:'Liberation Sans', sans-serif;transform:scaleX(0.914);transform-origin:0 0;">Glossary</div>
<div class="r" style="left:578.60px;top:202.10px;width:85.20px;height:1.10px;background:#3cb56f;"></div>
<div class="t" style="left:579.39px;top:206.39px;font-size:5.8px;line-height:5.8px;font-weight:400;color:#9a9a9a;font-family:'Liberation Sans', sans-serif;transform:scaleX(0.963);transform-origin:0 0;">Inventory status</div>
<div class="r" style="left:579.60px;top:213.00px;width:6.8px;height:6.8px;border-radius:50%;background:radial-gradient(circle at 42% 32%,#8af58a 0%,#2cc42c 30%,#0c9f0c 70%,#077d07 100%);"></div>
<div class="t" style="left:587.68px;top:214.57px;font-size:5.7px;line-height:5.7px;font-weight:700;color:#383838;font-family:'Liberation Sans', sans-serif;transform:scaleX(0.905);transform-origin:0 0;">Available</div>
<div class="t" style="left:579.47px;top:222.34px;font-size:6.1px;line-height:6.1px;font-weight:400;color:#575757;font-family:'Liberation Sans', sans-serif;transform:scaleX(0.875);transform-origin:0 0;-webkit-text-stroke:0.15px #575757;">Kits are available on site and ready</div>
<div class="t" style="left:579.47px;top:229.54px;font-size:6.1px;line-height:6.1px;font-weight:400;color:#575757;font-family:'Liberation Sans', sans-serif;transform:scaleX(0.890);transform-origin:0 0;-webkit-text-stroke:0.15px #575757;">to be dispensed.</div>
<svg style="left:579.30px;top:244.20px" width="7" height="7" viewBox="0 0 7 7"><rect x="0" y="0" width="6.8" height="6.3" rx="1.2" fill="#6289b5"/><path d="M1.7 3.0 A1.75 1.75 0 0 1 4.9 2.3 M5.1 3.4 A1.75 1.75 0 0 1 1.9 4.1" fill="none" stroke="#f2f6fb" stroke-width="0.85"/><path d="M4.2 1.5 L5.5 2.5 L4.1 3.0 Z" fill="#f2f6fb"/><path d="M2.6 4.9 L1.3 3.9 L2.7 3.4 Z" fill="#f2f6fb"/></svg>
<div class="t" style="left:587.29px;top:245.77px;font-size:5.7px;line-height:5.7px;font-weight:700;color:#383838;font-family:'Liberation Sans', sans-serif;transform:scaleX(0.975);transform-origin:0 0;">Awaiting</div>
<div class="t" style="left:579.48px;top:253.24px;font-size:6.1px;line-height:6.1px;font-weight:400;color:#575757;font-family:'Liberation Sans', sans-serif;transform:scaleX(0.909);transform-origin:0 0;-webkit-text-stroke:0.15px #575757;">Kits are still in transit.</div>
<div class="r" style="left:580.10px;top:268.05px;width:6.3px;height:6.3px;border-radius:50%;background:radial-gradient(circle at 42% 32%,#ff9a90 0%,#ea2a2a 35%,#c51212 75%,#9c0b0b 100%);"></div>
<div class="t" style="left:587.48px;top:269.17px;font-size:5.7px;line-height:5.7px;font-weight:700;color:#383838;font-family:'Liberation Sans', sans-serif;transform:scaleX(0.932);transform-origin:0 0;">On hold</div>
<div class="t" style="left:579.47px;top:277.14px;font-size:6.1px;line-height:6.1px;font-weight:400;color:#575757;font-family:'Liberation Sans', sans-serif;transform:scaleX(0.900);transform-origin:0 0;-webkit-text-stroke:0.15px #575757;">Kits are either quarantined,</div>
<div class="t" style="left:579.48px;top:284.72px;font-size:6.1px;line-height:6.1px;font-weight:400;color:#575757;font-family:'Liberation Sans', sans-serif;transform:scaleX(0.920);transform-origin:0 0;-webkit-text-stroke:0.15px #575757;">suspended or temporarily</div>
<div class="t" style="left:579.48px;top:292.30px;font-size:6.1px;line-height:6.1px;font-weight:400;color:#575757;font-family:'Liberation Sans', sans-serif;transform:scaleX(0.920);transform-origin:0 0;-webkit-text-stroke:0.15px #575757;">unavailable. Those kits are</div>
<div class="t" style="left:579.48px;top:299.88px;font-size:6.1px;line-height:6.1px;font-weight:400;color:#575757;font-family:'Liberation Sans', sans-serif;transform:scaleX(0.920);transform-origin:0 0;-webkit-text-stroke:0.15px #575757;">excluded from Supply App</div>
<div class="t" style="left:579.48px;top:307.46px;font-size:6.1px;line-height:6.1px;font-weight:400;color:#575757;font-family:'Liberation Sans', sans-serif;transform:scaleX(0.920);transform-origin:0 0;-webkit-text-stroke:0.15px #575757;">simulation.</div>
<div class="t" style="left:579.99px;top:324.09px;font-size:5.8px;line-height:5.8px;font-weight:400;color:#9a9a9a;font-family:'Liberation Sans', sans-serif;transform:scaleX(0.945);transform-origin:0 0;">Next stable dispensing</div>
<svg style="left:579.6px;top:331.6px" width="7" height="7" viewBox="0 0 7 7"><circle cx="3.3" cy="2.5" r="2.35" fill="#fff" stroke="#555" stroke-width="0.8"/><path d="M3.3 1.1 V2.6 H4.6" fill="none" stroke="#555" stroke-width="0.7"/></svg>
<div class="t" style="left:587.39px;top:331.77px;font-size:5.7px;line-height:5.7px;font-weight:700;color:#383838;font-family:'Liberation Sans', sans-serif;transform:scaleX(0.955);transform-origin:0 0;">Patient out of window</div>
<div class="t" style="left:579.57px;top:339.54px;font-size:6.1px;line-height:6.1px;font-weight:400;color:#575757;font-family:'Liberation Sans', sans-serif;transform:scaleX(0.908);transform-origin:0 0;-webkit-text-stroke:0.15px #575757;">According to the &quot;Latest next visit</div>
<div class="t" style="left:579.57px;top:347.34px;font-size:6.1px;line-height:6.1px;font-weight:400;color:#575757;font-family:'Liberation Sans', sans-serif;transform:scaleX(0.892);transform-origin:0 0;-webkit-text-stroke:0.15px #575757;">date&quot;, this patient is late for his</div>
<div class="t" style="left:579.57px;top:354.94px;font-size:6.1px;line-height:6.1px;font-weight:400;color:#575757;font-family:'Liberation Sans', sans-serif;transform:scaleX(0.900);transform-origin:0 0;-webkit-text-stroke:0.15px #575757;">next visit.</div>
<div class="r" style="left:570.30px;top:365.20px;width:103.80px;height:60.30px;background:transparent;border:2px solid #f8300f;box-sizing:border-box;"></div>
<div class="r" style="left:576.30px;top:373.70px;width:91.70px;height:19.10px;background:#fff;border:1px solid #98dbe4;box-sizing:border-box;"></div>
<svg style="left:579.30px;top:381.00px" width="7" height="6" viewBox="0 0 7 6"><rect x="0.2" y="0" width="1.1" height="5.2" fill="#4cc2d0"/><rect x="2.5" y="0" width="1.1" height="5.2" fill="#4cc2d0"/><rect x="4.8" y="0" width="1.1" height="5.2" fill="#4cc2d0"/><rect x="0" y="3.2" width="1.5" height="1.0" fill="#4cc2d0"/><rect x="2.3" y="1.2" width="1.5" height="1.0" fill="#4cc2d0"/><rect x="4.6" y="2.6" width="1.5" height="1.0" fill="#4cc2d0"/></svg>
<div class="t" style="left:586.77px;top:381.05px;font-size:6.2px;line-height:6.2px;font-weight:400;color:#2fb5c6;font-family:'Liberation Sans', sans-serif;transform:scaleX(0.886);transform-origin:0 0;-webkit-text-stroke:0.12px #2fb5c6;">Depot inventories</div>
<div class="r" style="left:576.30px;top:397.20px;width:91.70px;height:19.40px;background:#05b5c9;"></div>
<svg style="left:579.30px;top:404.20px" width="7" height="6" viewBox="0 0 7 6"><rect x="0.2" y="0" width="1.1" height="5.2" fill="#ffffff"/><rect x="2.5" y="0" width="1.1" height="5.2" fill="#ffffff"/><rect x="4.8" y="0" width="1.1" height="5.2" fill="#ffffff"/><rect x="0" y="3.2" width="1.5" height="1.0" fill="#ffffff"/><rect x="2.3" y="1.2" width="1.5" height="1.0" fill="#ffffff"/><rect x="4.6" y="2.6" width="1.5" height="1.0" fill="#ffffff"/></svg>
<div class="t" style="left:586.78px;top:404.31px;font-size:6.6px;line-height:6.6px;font-weight:400;color:#ffffff;font-family:'Liberation Sans', sans-serif;transform:scaleX(0.929);transform-origin:0 0;-webkit-text-stroke:0.2px #fff;">Site inventories</div>
</div></body></html>
